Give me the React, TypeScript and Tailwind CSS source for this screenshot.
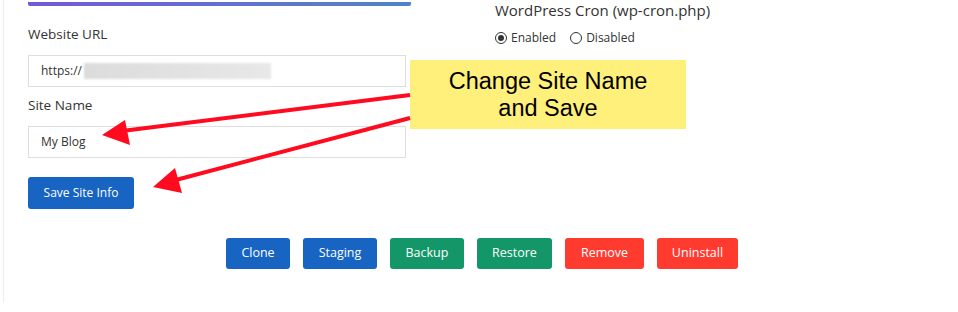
const buttons = [
  { label: 'Clone', w: 'w-[64px]', bg: 'bg-[#1764c2]' },
  { label: 'Staging', w: 'w-[74px]', bg: 'bg-[#1764c2]' },
  { label: 'Backup', w: 'w-[74px]', bg: 'bg-[#139668]' },
  { label: 'Restore', w: 'w-[75px]', bg: 'bg-[#139668]' },
  { label: 'Remove', w: 'w-[79px]', bg: 'bg-[#ff3b2f]' },
  { label: 'Uninstall', w: 'w-[81px]', bg: 'bg-[#ff3b2f]' },
]

function Radio({ checked, label }: { checked?: boolean; label: string }) {
  return (
    <label className="flex items-center gap-[4px] text-[12px] text-[#333]">
      <span className="flex h-[12px] w-[12px] items-center justify-center rounded-full border border-[#333] bg-white">
        {checked && <span className="h-[6px] w-[6px] rounded-full bg-[#333]" />}
      </span>
      {label}
    </label>
  )
}

export default function App() {
  return (
    <div
      className="relative h-[312px] w-[958px] overflow-hidden bg-white"
      style={{ fontFamily: '"Open Sans", "Noto Sans", sans-serif' }}
    >
      <div className="ml-[3px] h-[303px] border-l border-[#ececec] pl-[24px]">
        <div className="flex">
          {/* site info */}
          <div className="w-[383px]">
            <div className="mt-[2px] h-[4px] rounded-b-[2px] bg-gradient-to-r from-[#7358d6] to-[#4f84c8]" />
            <div className="mt-[18px] text-[13.5px] leading-[20px] text-[#333]">Website URL</div>
            <div className="mt-[11px] flex h-[32px] w-[378px] items-center border border-[#dedede] px-[12px] text-[12px] text-[#333]">
              https://
              <span className="ml-[2px] h-[16px] w-[187px] bg-gradient-to-r from-[#dcdcdc] via-[#e2e2e2] to-[#e8e8e8] blur-[1px]" />
            </div>
            <div className="mt-[8px] text-[13.5px] leading-[20px] text-[#333]">Site Name</div>
            <div className="mt-[11px] flex h-[32px] w-[378px] items-center border border-[#dedede] px-[12px] text-[12px] text-[#333]">
              My Blog
            </div>
            <button className="mt-[19px] h-[32px] w-[106px] rounded-[3px] bg-[#1764c2] text-[12px] text-white">
              Save Site Info
            </button>
          </div>

          {/* cron */}
          <div className="ml-[84px]">
            <div className="text-[15px] leading-[20px] text-[#333]">WordPress Cron (wp-cron.php)</div>
            <div className="mt-[9px] flex items-center gap-[14px]">
              <Radio checked label="Enabled" />
              <Radio label="Disabled" />
            </div>
          </div>
        </div>

        <div className="mt-[29px] flex gap-[13px] pl-[198px]">
          {buttons.map((b) => (
            <button
              key={b.label}
              className={`h-[31px] rounded-[3px] text-[12.5px] text-white ${b.w} ${b.bg}`}
            >
              {b.label}
            </button>
          ))}
        </div>
      </div>

      {/* annotation */}
      <div
        className="absolute left-[410px] top-[60px] flex h-[69px] w-[276px] flex-col items-center justify-center bg-[#fff07c] text-center text-[23.5px] leading-[27px] text-black"
        style={{ fontFamily: '"Liberation Sans", Arial, sans-serif' }}
      >
        <span>Change Site Name</span>
        <span>and Save</span>
      </div>
      <svg className="pointer-events-none absolute left-0 top-0" width="958" height="312">
        <line x1="410" y1="95" x2="122" y2="131" stroke="#ff0a1e" strokeWidth="4" />
        <polygon points="102,135 125,120 130,145" fill="#ff0a1e" />
        <line x1="410" y1="118" x2="172" y2="181" stroke="#ff0a1e" strokeWidth="4" />
        <polygon points="153,187 175,168 182,193" fill="#ff0a1e" />
      </svg>
    </div>
  )
}
